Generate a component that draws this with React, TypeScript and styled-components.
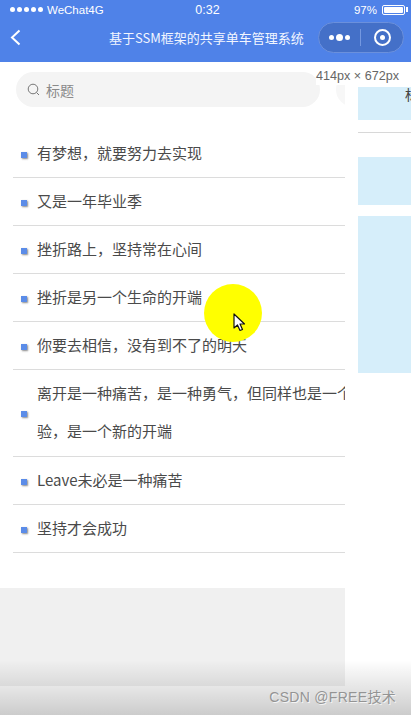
import styled, { createGlobalStyle } from "styled-components";

const GlobalStyle = createGlobalStyle`
  html, body {
    margin: 0;
    padding: 0;
    background: #fff;
  }
  * {
    box-sizing: border-box;
  }
`;

const FONT = `"Noto Sans CJK SC", "Noto Sans", "Liberation Sans", sans-serif`;

const Page = styled.div`
  position: relative;
  width: 411px;
  height: 715px;
  overflow: hidden;
  background: #fff;
  font-family: ${FONT};
`;

const Header = styled.header`
  height: 62px;
  background: #4f82e8;
  color: #fff;
`;

const StatusBar = styled.div`
  height: 19px;
  padding: 0 6px 0 10px;
  display: grid;
  grid-template-columns: 1fr auto 1fr;
  align-items: center;
  font-family: "Liberation Sans", sans-serif;
  font-size: 11.5px;
`;

const Carrier = styled.div`
  display: flex;
  align-items: center;
  gap: 4px;
`;

const Signal = styled.div`
  display: flex;
  gap: 2px;
`;

const SignalDot = styled.span`
  width: 5px;
  height: 5px;
  border-radius: 50%;
  background: #fff;
`;

const Clock = styled.div`
  font-size: 12.5px;
`;

const Battery = styled.div`
  justify-self: end;
  display: flex;
  align-items: center;
  gap: 5px;
`;

const BatteryIcon = styled.div`
  position: relative;
  width: 23px;
  height: 10px;
  padding: 1px;
  border: 1px solid #fff;
  border-radius: 2px;
  &::before {
    content: "";
    display: block;
    height: 100%;
    background: #fff;
    border-radius: 1px;
  }
  &::after {
    content: "";
    position: absolute;
    right: -4px;
    top: 1.5px;
    width: 2px;
    height: 5px;
    background: #fff;
  }
`;

const NavBar = styled.div`
  height: 43px;
  padding: 0 7px 7px 10px;
  display: flex;
  align-items: center;
`;

const BackIcon = styled.svg`
  width: 11px;
  height: 17px;
  flex: none;
`;

const NavTitle = styled.div`
  flex: 1;
  padding-left: 88px;
  font-size: 13px;
  white-space: nowrap;
  color: #f2f6ff;
`;

const Capsule = styled.div`
  flex: none;
  width: 86px;
  height: 31px;
  border-radius: 16px;
  background: #4470c8;
  border: 1px solid #6b90dc;
  display: grid;
  grid-template-columns: 42px 43px;
  align-items: center;
`;

const CapsuleMore = styled.div`
  height: 17px;
  display: flex;
  align-items: center;
  justify-content: center;
  gap: 2px;
  border-right: 1px solid #7498e0;
`;

const MoreDot = styled.span<{ $big?: boolean }>`
  width: ${(p) => (p.$big ? 7 : 5)}px;
  height: ${(p) => (p.$big ? 7 : 5)}px;
  border-radius: 50%;
  background: #fff;
`;

const CapsuleTarget = styled.div`
  width: 17px;
  height: 17px;
  justify-self: center;
  border: 2px solid #fff;
  border-radius: 50%;
  display: flex;
  align-items: center;
  justify-content: center;
  &::before {
    content: "";
    width: 5px;
    height: 5px;
    border-radius: 50%;
    background: #fff;
  }
`;

const Body = styled.div`
  display: flex;
`;

const Main = styled.main`
  width: 345px;
  flex: none;
  overflow: hidden;
`;

const SearchRow = styled.div`
  padding: 10px 0 0 16px;
  display: flex;
  gap: 16px;
`;

const SearchBox = styled.div`
  width: 304px;
  height: 35px;
  flex: none;
  padding-left: 11px;
  border-radius: 18px;
  background: #f4f4f4;
  display: flex;
  align-items: center;
  gap: 6px;
  font-size: 14px;
  color: #8a8a8a;
`;

const SearchIcon = styled.svg`
  width: 13px;
  height: 13px;
  flex: none;
`;

const SearchPeek = styled.div`
  width: 60px;
  height: 35px;
  flex: none;
  border-radius: 18px;
  background: #f7f7f7;
`;

const List = styled.ul`
  list-style: none;
  margin: 23px 0 0 13px;
  padding: 0;
`;

const Row = styled.li<{ $double?: boolean }>`
  padding: 4px 0 ${(p) => (p.$double ? 6 : 5)}px 8px;
  display: flex;
  align-items: center;
  gap: 10px;
  border-bottom: 1px solid #dcdcdc;
  font-size: 15px;
  line-height: 38px;
  color: #4a4a4a;
`;

const Bullet = styled.span`
  width: 6px;
  height: 6px;
  margin-top: 4px;
  flex: none;
  background: #5b8ce8;
  box-shadow: 1px 1px 2px #8a8a8a;
`;

const RowText = styled.span`
  white-space: nowrap;
`;

const Footer = styled.div`
  height: 98px;
  margin-top: 35px;
  background: #f0f0f0;
`;

const Side = styled.aside`
  margin-left: 13px;
  flex: 1;
  min-width: 0;
  overflow: hidden;
`;

const SidePanel = styled.div<{ $top: number; $height: number }>`
  margin-top: ${(p) => p.$top}px;
  height: ${(p) => p.$height}px;
  background: #d6eefa;
`;

const SideLabel = styled.div`
  padding-left: 47px;
  font-size: 14px;
  line-height: 14px;
  color: #444;
  white-space: nowrap;
`;

const SideRule = styled.div`
  margin-top: 12px;
  height: 1px;
  background: #d8d8d8;
`;

const SizeTip = styled.div`
  position: absolute;
  top: 68px;
  right: 0;
  width: 95px;
  height: 17px;
  background: #fff;
  font-family: "Liberation Sans", sans-serif;
  font-size: 12.6px;
  line-height: 16px;
  color: #666;
  white-space: nowrap;
`;

const ClickSpot = styled.div`
  position: absolute;
  left: 204px;
  top: 284px;
  width: 58px;
  height: 58px;
  border-radius: 50%;
  background: #ffff00;
`;

const Cursor = styled.svg`
  position: absolute;
  left: 233px;
  top: 313px;
  width: 13px;
  height: 19px;
`;

const BottomShade = styled.div`
  position: absolute;
  left: 0;
  right: 0;
  top: 660px;
  bottom: 0;
  background: linear-gradient(rgba(0, 0, 0, 0), rgba(0, 0, 0, 0.2));
  pointer-events: none;
`;

const Watermark = styled.div`
  position: absolute;
  right: 15px;
  top: 687px;
  font-family: "Liberation Sans", "Noto Sans CJK SC", sans-serif;
  font-size: 14px;
  line-height: 20px;
  letter-spacing: 0.3px;
  color: #949494;
  text-shadow: 1px 1px 0 #f4f4f4;
  white-space: nowrap;
`;

const items = [
  "有梦想，就要努力去实现",
  "又是一年毕业季",
  "挫折路上，坚持常在心间",
  "挫折是另一个生命的开端",
  "你要去相信，没有到不了的明天",
  ["离开是一种痛苦，是一种勇气，但同样也是一个", "验，是一个新的开端"],
  "Leave未必是一种痛苦",
  "坚持才会成功",
];

export default function App() {
  return (
    <Page>
      <GlobalStyle />
      <Header>
        <StatusBar>
          <Carrier>
            <Signal>
              {[0, 1, 2, 3, 4].map((i) => (
                <SignalDot key={i} />
              ))}
            </Signal>
            WeChat4G
          </Carrier>
          <Clock>0:32</Clock>
          <Battery>
            97%
            <BatteryIcon />
          </Battery>
        </StatusBar>
        <NavBar>
          <BackIcon viewBox="0 0 11 17">
            <path d="M9.5 1.5 L2 8.5 L9.5 15.5" fill="none" stroke="#fff" strokeWidth="2" />
          </BackIcon>
          <NavTitle>基于SSM框架的共享单车管理系统</NavTitle>
          <Capsule>
            <CapsuleMore>
              <MoreDot />
              <MoreDot $big />
              <MoreDot />
            </CapsuleMore>
            <CapsuleTarget />
          </Capsule>
        </NavBar>
      </Header>
      <Body>
        <Main>
          <SearchRow>
            <SearchBox>
              <SearchIcon viewBox="0 0 13 13">
                <circle cx="6" cy="6" r="4.8" fill="none" stroke="#777" strokeWidth="1" />
                <path d="M9.5 9.5 L12 12" stroke="#777" strokeWidth="1" />
              </SearchIcon>
              标题
            </SearchBox>
            <SearchPeek />
          </SearchRow>
          <List>
            {items.map((item, i) => (
              <Row key={i} $double={Array.isArray(item)}>
                <Bullet />
                {Array.isArray(item) ? (
                  <RowText>
                    {item[0]}
                    <br />
                    {item[1]}
                  </RowText>
                ) : (
                  <RowText>{item}</RowText>
                )}
              </Row>
            ))}
          </List>
          <Footer />
        </Main>
        <Side>
          <SidePanel $top={25} $height={33}>
            <SideLabel>标题</SideLabel>
          </SidePanel>
          <SideRule />
          <SidePanel $top={24} $height={48} />
          <SidePanel $top={11} $height={157} />
        </Side>
      </Body>
      <SizeTip>414px × 672px</SizeTip>
      <ClickSpot />
      <Cursor viewBox="0 0 13 19">
        <path
          d="M1 1 L1 15 L4.5 12 L7 17.5 L9.5 16.5 L7 11 L11.5 11 Z"
          fill="#fff"
          stroke="#111"
          strokeWidth="1.2"
          strokeLinejoin="round"
        />
      </Cursor>
      <BottomShade />
      <Watermark>CSDN @FREE技术</Watermark>
    </Page>
  );
}
